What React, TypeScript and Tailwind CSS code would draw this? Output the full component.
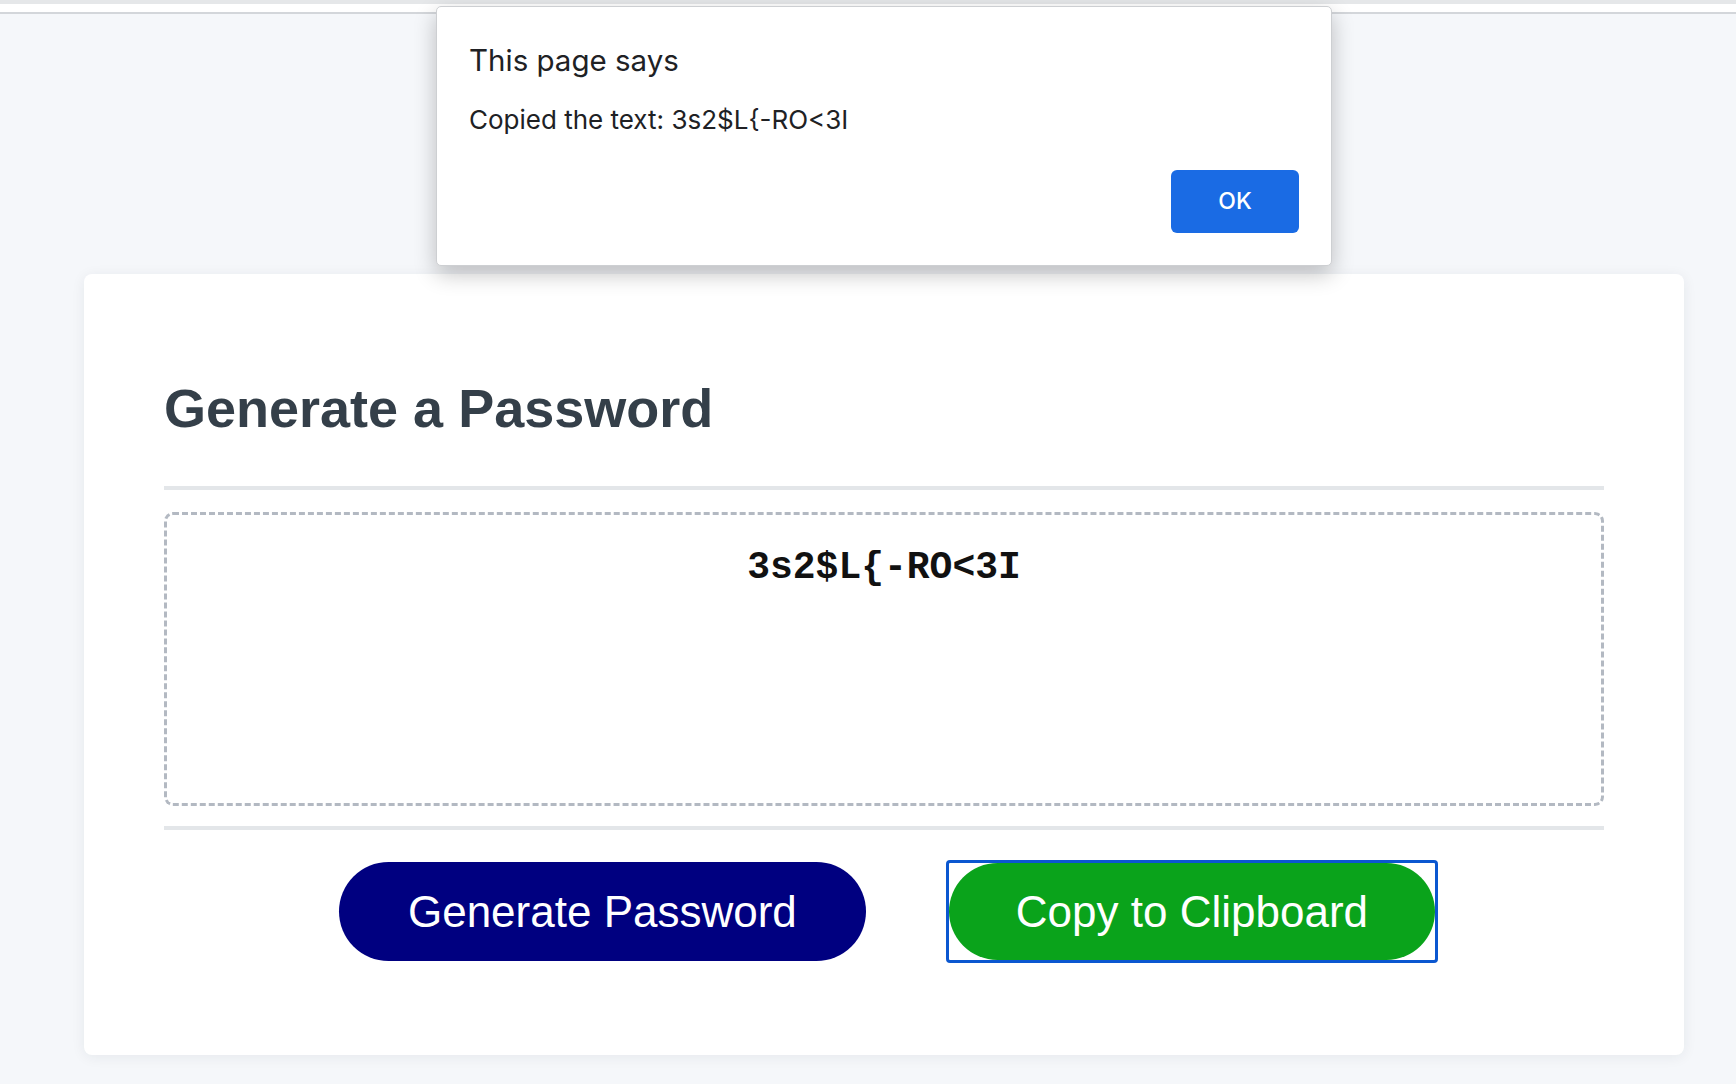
import React from 'react';

const password = '3s2$L{-RO<3I';

const App: React.FC = () => {
  return (
    <div className="relative min-h-screen bg-[#f5f7fa]">
      {/* browser top edge */}
      <div className="h-[4px] bg-[#e5e7e9]" />
      <div className="h-[8px] bg-white" />
      <div className="h-[2px] bg-[#d3d6da]" />

      {/* card */}
      <div className="ml-[84px] mt-[260px] w-[1600px] rounded-[8px] bg-white px-[80px] pt-[103px] pb-[92px] shadow-[0_2px_14px_rgba(30,40,60,0.07)]">
        <h1 className="font-['Liberation_Sans',Arial,sans-serif] text-[54px] font-bold leading-[62px] text-[#343f49]">
          Generate a Password
        </h1>

        <div className="mt-[47px] h-[4px] bg-[#e3e6e9]" />

        <div className="mt-[22px] h-[294px] rounded-[9px] border-[3px] border-dashed border-[#b3b9c2] pt-[31px] text-center">
          <span className="font-['Liberation_Mono','Courier_New',monospace] text-[38px] font-bold leading-[43px] text-[#111]">
            {password}
          </span>
        </div>

        <div className="mt-[20px] h-[4px] bg-[#e3e6e9]" />

        <div className="mt-[30px] flex items-center justify-center gap-[80px] pl-[9px] font-['Liberation_Sans',Arial,sans-serif]">
          <button className="h-[99px] rounded-full bg-[#000080] px-[69px] text-[44px] leading-[51px] text-white">
            Generate Password
          </button>
          <div className="rounded-[4px] border-[3px] border-[#0b57d0] bg-white">
            <button className="block h-[97px] rounded-full bg-[#0aa31b] px-[67px] text-[44px] leading-[51px] text-white">
              Copy to Clipboard
            </button>
          </div>
        </div>
      </div>

      {/* alert dialog */}
      <div className="absolute left-[436px] top-[6px] flex h-[260px] w-[896px] flex-col rounded-[5px] border border-[#cdcfd2] bg-white px-[32px] pt-[35px] pb-[32px] font-['Inter','Noto_Sans',sans-serif] text-[#202124] shadow-[0_8px_22px_rgba(0,0,0,0.24)]">
        <div className="text-[29.5px] leading-[36px]">This page says</div>
        <div className="mt-[25px] text-[26px] leading-[33px]">Copied the text: {password}</div>
        <div className="mt-auto flex justify-end">
          <button className="h-[63px] w-[128px] rounded-[6px] bg-[#1a6be4] text-[23px] font-medium text-white">
            OK
          </button>
        </div>
      </div>
    </div>
  );
};

export default App;
